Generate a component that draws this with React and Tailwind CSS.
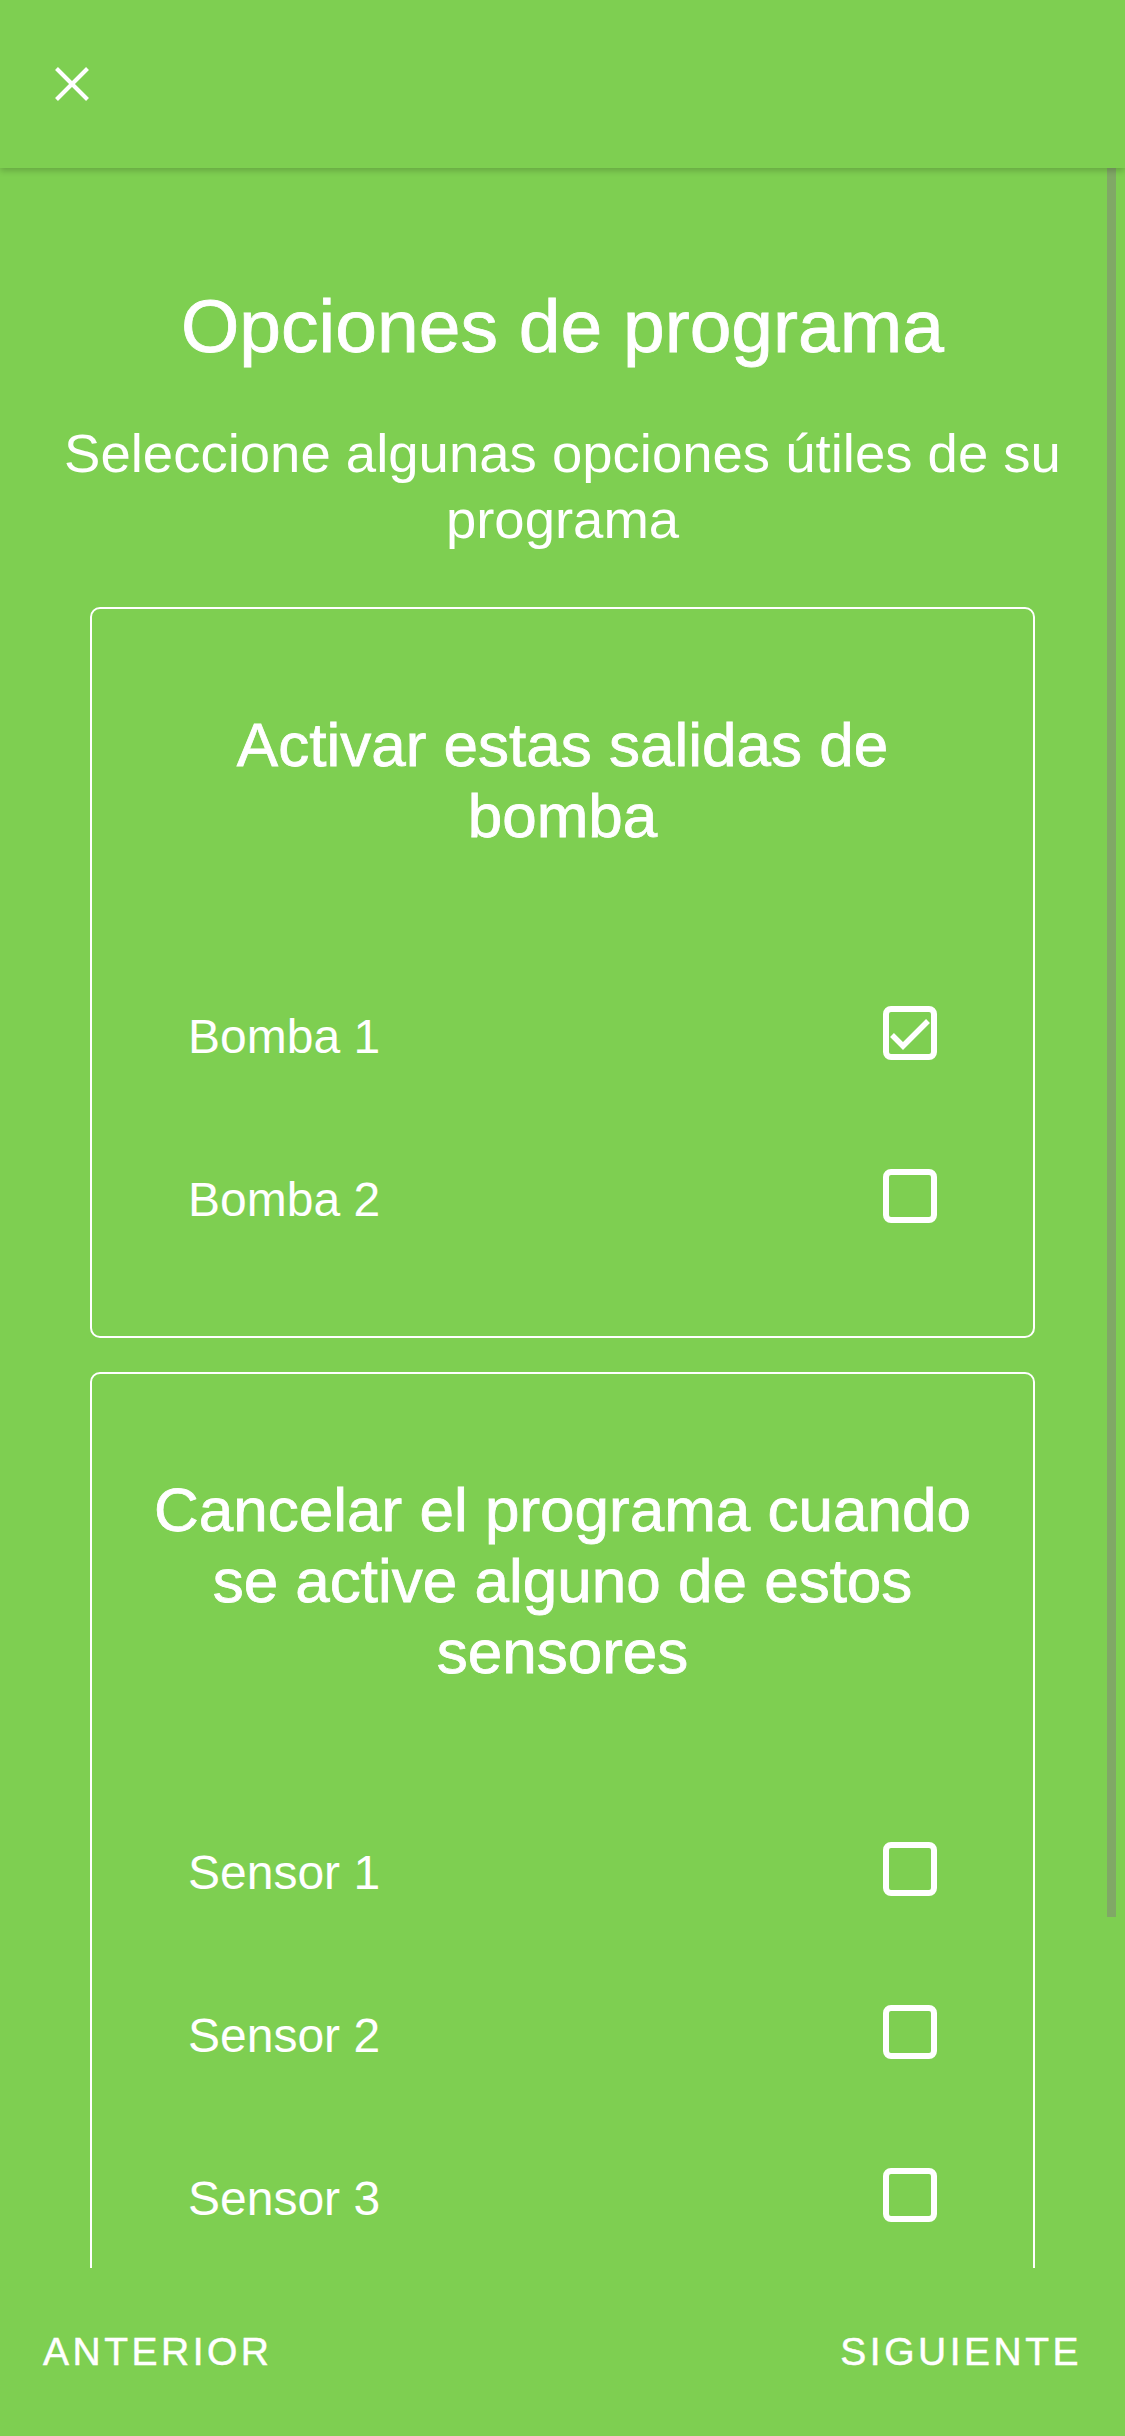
import React, { useState } from "react";

const CheckBox = ({ checked, onClick }) => (
  <button onClick={onClick} className="w-[54px] h-[54px] shrink-0">
    <svg width="54" height="54" viewBox="0 0 54 54" fill="none">
      <rect x="3" y="3" width="48" height="48" rx="5" stroke="white" strokeWidth="6" />
      {checked && (
        <polyline points="9,29 20,40 45,15" stroke="white" strokeWidth="5.5" fill="none" />
      )}
    </svg>
  </button>
);

const OptionCard = ({ title, items, values, onToggle }) => (
  <div className="border-2 border-white rounded-[10px] pt-[100px] pb-[59px]">
    <h2 className="px-[55px] text-center text-[62px] leading-[71px] [-webkit-text-stroke:0.8px_white]">
      {title}
    </h2>
    <div className="mt-[100px] flex flex-col">
      {items.map((label, i) => (
        <div key={label} className="h-[163px] flex items-center justify-between px-[96px]">
          <span className="text-[48px] pt-[8px]">{label}</span>
          <CheckBox checked={values[i]} onClick={() => onToggle(i)} />
        </div>
      ))}
    </div>
  </div>
);

export default function App() {
  const [pumps, setPumps] = useState([true, false]);
  const [sensors, setSensors] = useState([false, false, false]);

  const toggle = (arr, set) => (i) => set(arr.map((v, j) => (j === i ? !v : v)));

  return (
    <div className="w-[1125px] h-[2436px] flex flex-col overflow-hidden bg-[#7ecf51] text-white font-['Liberation_Sans',Arial,sans-serif]">
      <header className="h-[168px] shrink-0 flex items-center pl-[55px] relative z-10 bg-[#7ecf51] shadow-[0_3px_6px_rgba(0,0,0,0.18)]">
        <svg width="34" height="34" viewBox="0 0 34 34">
          <line x1="1.5" y1="1.5" x2="32.5" y2="32.5" stroke="white" strokeWidth="4" />
          <line x1="32.5" y1="1.5" x2="1.5" y2="32.5" stroke="white" strokeWidth="4" />
        </svg>
      </header>

      <main className="flex-1 overflow-hidden relative">
        <div className="pt-[114px]">
          <h1 className="text-center text-[75px] leading-[89px] [-webkit-text-stroke:0.8px_white]">
            Opciones de programa
          </h1>
          <p className="mt-[50px] px-[40px] text-center text-[54.5px] leading-[66px]">
            Seleccione algunas opciones útiles de su programa
          </p>
          <div className="mt-[54px] mx-[90px] flex flex-col gap-[34px]">
            <OptionCard
              title="Activar estas salidas de bomba"
              items={["Bomba 1", "Bomba 2"]}
              values={pumps}
              onToggle={toggle(pumps, setPumps)}
            />
            <OptionCard
              title="Cancelar el programa cuando se active alguno de estos sensores"
              items={["Sensor 1", "Sensor 2", "Sensor 3"]}
              values={sensors}
              onToggle={toggle(sensors, setSensors)}
            />
          </div>
        </div>
        <div className="absolute top-0 right-[9px] w-[9px] h-[1749px] bg-[#80a866]" />
      </main>

      <footer className="h-[168px] shrink-0 flex items-center justify-between px-[43px] text-[39px] tracking-[3.5px] [-webkit-text-stroke:0.5px_white]">
        <button>ANTERIOR</button>
        <button>SIGUIENTE</button>
      </footer>
    </div>
  );
}
